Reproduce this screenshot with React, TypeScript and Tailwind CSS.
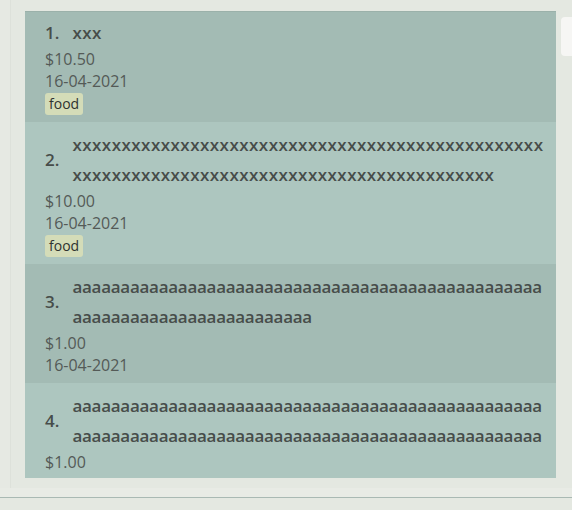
type Expense = {
  name: string;
  amount: string;
  date?: string;
  tags: string[];
  tracking: string;
};

const expenses: Expense[] = [
  { name: 'xxx', amount: '$10.50', date: '16-04-2021', tags: ['food'], tracking: 'tracking-[0.45px]' },
  { name: 'x'.repeat(91), amount: '$10.00', date: '16-04-2021', tags: ['food'], tracking: 'tracking-[0.45px]' },
  { name: 'a'.repeat(74), amount: '$1.00', date: '16-04-2021', tags: [], tracking: 'tracking-[-0.28px]' },
  { name: 'a'.repeat(98), amount: '$1.00', tags: [], tracking: 'tracking-[-0.28px]' },
];

function ExpenseCard({ expense, index }: { expense: Expense; index: number }) {
  const dark = index % 2 === 0;

  return (
    <div
      className={`pl-[20px] pr-[10px] pb-[7px] ${
        index === 0 ? 'border-t border-[#9bb1aa] pt-[6px]' : 'pt-[8px]'
      } ${dark ? 'bg-[#a3bbb4]' : 'bg-[#adc6bf]'}`}
    >
      <div className="flex items-center gap-[13px] text-[17px] font-semibold leading-[30px] text-[#474d4a]">
        <span className="shrink-0">{index + 1}.</span>
        <span className={`min-w-0 break-all ${expense.tracking}`}>{expense.name}</span>
      </div>
      <div className="text-[16px] leading-[22px] text-[#545a57]">{expense.amount}</div>
      {expense.date && (
        <div className="text-[16px] leading-[22px] text-[#545a57]">{expense.date}</div>
      )}
      {expense.tags.length > 0 && (
        <div className="mt-px flex gap-1">
          {expense.tags.map((tag) => (
            <span
              key={tag}
              className="h-[22px] rounded-[3px] bg-[#d4dcb8] px-[4px] text-[14px] leading-[22px] text-[#2f3330]"
            >
              {tag}
            </span>
          ))}
        </div>
      )}
    </div>
  );
}

export default function App() {
  return (
    <div
      className="flex h-[510px] w-[572px] flex-col overflow-hidden bg-[#e4e8e1]"
      style={{ fontFamily: '"Open Sans", "Noto Sans", sans-serif' }}
    >
      <div className="flex h-[488px] shrink-0">
        <div className="w-[11px] shrink-0 border-r border-[#dde1da] bg-[#e6e9e3]" />
        <div className="ml-[14px] mt-[11px] h-[467px] w-[531px] shrink-0 overflow-hidden">
          {expenses.map((expense, i) => (
            <ExpenseCard key={i} expense={expense} index={i} />
          ))}
        </div>
        <div className="ml-[5px] mt-[17px] h-[39px] w-[20px] shrink-0 rounded-[4px] bg-[#f6f6f4]" />
      </div>
      <div className="h-[9px] shrink-0 bg-[#e8ebe5]" />
      <div className="h-px shrink-0 bg-[#a9b9b3]" />
      <div className="flex-1 bg-[#e4e8e1]" />
    </div>
  );
}
